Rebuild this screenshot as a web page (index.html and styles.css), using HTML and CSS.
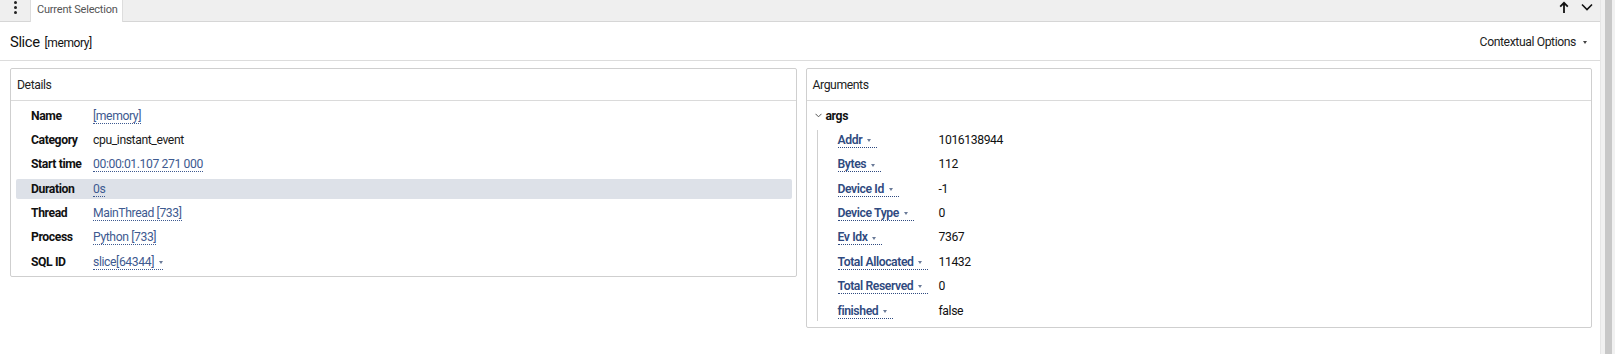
FILE: index.html
```html
<!DOCTYPE html>
<html>
<head>
<meta charset="utf-8">
<link rel="stylesheet" href="styles.css">
</head>
<body>
<div class="app">
  <div class="main">
    <div class="tabbar">
      <div class="kebab"><span></span><span></span><span></span></div>
      <div class="tab">Current Selection</div>
      <div class="spacer"></div>
      <div class="bar-icons">
        <svg class="ico-up" width="10" height="13" viewBox="0 0 10 13"><path d="M5 12V2M1.2 5.6L5 1.8l3.8 3.8" fill="none" stroke="#111" stroke-width="1.8"/></svg>
        <svg class="ico-down" width="12" height="8" viewBox="0 0 12 8"><path d="M1 1.5l5 5 5-5" fill="none" stroke="#111" stroke-width="1.6"/></svg>
      </div>
    </div>
    <div class="titlebar">
      <div class="title"><span class="title-main">Slice</span><span class="title-sub">[memory]</span></div>
      <div class="ctx">Contextual Options <i class="caret dark"></i></div>
    </div>
    <div class="content">
      <section class="panel details">
        <div class="panel-head">Details</div>
        <div class="panel-body">
          <div class="row"><span class="lbl">Name</span><span class="val"><span class="link">[memory]</span></span></div>
          <div class="row"><span class="lbl">Category</span><span class="val">cpu_instant_event</span></div>
          <div class="row"><span class="lbl">Start time</span><span class="val"><span class="link">00:00:01.107 271 000</span></span></div>
          <div class="row hl"><span class="lbl">Duration</span><span class="val"><span class="link">0s</span></span></div>
          <div class="row"><span class="lbl">Thread</span><span class="val"><span class="link">MainThread [733]</span></span></div>
          <div class="row"><span class="lbl">Process</span><span class="val"><span class="link">Python [733]</span></span></div>
          <div class="row"><span class="lbl">SQL ID</span><span class="val"><span class="link">slice[64344] <i class="caret"></i></span></span></div>
        </div>
      </section>
      <section class="panel arguments">
        <div class="panel-head">Arguments</div>
        <div class="panel-body">
          <div class="tree-head">
            <svg class="chev" width="7" height="5" viewBox="0 0 7 5"><path d="M0.5 0.8l3 3 3-3" fill="none" stroke="#555" stroke-width="1"/></svg>
            <span class="tree-name">args</span>
          </div>
          <div class="tree-children">
            <div class="arow"><span class="key"><span class="klink">Addr <i class="caret"></i></span></span><span class="aval">1016138944</span></div>
            <div class="arow"><span class="key"><span class="klink">Bytes <i class="caret"></i></span></span><span class="aval">112</span></div>
            <div class="arow"><span class="key"><span class="klink">Device Id <i class="caret"></i></span></span><span class="aval">-1</span></div>
            <div class="arow"><span class="key"><span class="klink">Device Type <i class="caret"></i></span></span><span class="aval">0</span></div>
            <div class="arow"><span class="key"><span class="klink">Ev Idx <i class="caret"></i></span></span><span class="aval">7367</span></div>
            <div class="arow"><span class="key"><span class="klink">Total Allocated <i class="caret"></i></span></span><span class="aval">11432</span></div>
            <div class="arow"><span class="key"><span class="klink">Total Reserved <i class="caret"></i></span></span><span class="aval">0</span></div>
            <div class="arow"><span class="key"><span class="klink">finished <i class="caret"></i></span></span><span class="aval">false</span></div>
          </div>
        </div>
      </section>
    </div>
  </div>
  <div class="scrollbar"><div class="thumb"></div></div>
</div>
</body>
</html>
```

FILE: styles.css
```css
* { box-sizing: border-box; }
html, body { margin: 0; padding: 0; background: #fff; }
body {
  font-family: Roboto, "Noto Sans", sans-serif;
  font-size: 12.2px;
  letter-spacing: -0.4px;
  color: #1a1a1a;
  width: 1615px;
  height: 354px;
  overflow: hidden;
}
.app { display: flex; height: 354px; }
.main { flex: 1; display: flex; flex-direction: column; min-width: 0; }

.tabbar {
  height: 22px;
  background: #efefef;
  border-bottom: 1px solid #d6d6d6;
  display: flex;
  align-items: stretch;
}
.kebab {
  width: 30px;
  display: flex;
  flex-direction: column;
  align-items: center;
  padding-top: 1px;
  gap: 2px;
}
.kebab span { width: 3px; height: 3px; border-radius: 50%; background: #222; }
.tab {
  width: 93px;
  background: #fff;
  border-left: 1px solid #ddd;
  border-right: 1px solid #ddd;
  margin-bottom: -1px;
  font-size: 11px;
  letter-spacing: -0.2px;
  color: #555;
  padding: 3px 0 0 6px;
}
.spacer { flex: 1; }
.bar-icons { display: flex; align-items: flex-start; gap: 12px; padding: 1px 7px 0 0; }
.ico-down { margin-top: 2px; }

.titlebar {
  height: 39px;
  border-bottom: 1px solid #dcdcdc;
  display: flex;
  align-items: center;
  justify-content: space-between;
  padding: 2px 13px 0 10px;
}
.title-main { font-size: 14.8px; color: #111; }
.title-sub { font-size: 12px; margin-left: 5px; color: #111; }
.ctx { font-size: 12.2px; color: #222; display: flex; align-items: center; gap: 5px; }

.caret {
  display: inline-block;
  width: 0; height: 0;
  border-left: 2.5px solid transparent;
  border-right: 2.5px solid transparent;
  border-top: 3px solid #6a7a98;
  vertical-align: middle;
  margin-left: 2px;
}
.caret.dark { border-top-color: #444; }

.content {
  display: flex;
  align-items: flex-start;
  gap: 9px;
  padding: 7px 8px 0 10px;
}
.panel {
  flex: 1;
  border: 1px solid #cfcfcf;
  border-radius: 2px;
}
.panel-head {
  height: 32px;
  border-bottom: 1px solid #dadada;
  padding: 0 6px;
  display: flex;
  align-items: center;
  color: #222;
}
.details .panel-body { padding: 4.7px 4px 4.3px 5px; display: flex; flex-direction: column; gap: 4.37px; }
.row {
  height: 20px;
  display: grid;
  grid-template-columns: 62px 1fr;
  align-items: center;
  padding-left: 15px;
  border-radius: 2px;
}
.row.hl { background: #dde1e8; }
.lbl { font-weight: 700; color: #111; }
.link {
  color: #3e5a90;
  border-bottom: 1px dotted #3e5a90;
  padding-bottom: 0;
}

.arguments .panel-body { padding: 4.7px 4px 6px 8px; display: flex; flex-direction: column; gap: 4.37px; }
.tree-head { height: 20px; display: flex; align-items: center; }
.chev { margin-right: 4px; }
.tree-name { font-weight: 700; color: #111; }
.tree-children {
  margin-left: 2px;
  border-left: 1px solid #cfcfcf;
  display: flex;
  flex-direction: column;
  gap: 4.37px;
}
.arow {
  height: 20px;
  display: grid;
  grid-template-columns: 101px 1fr;
  align-items: center;
  padding-left: 20px;
}
.klink {
  color: #2f4a80;
  font-weight: 600;
  border-bottom: 1px dotted #2f4a80;
  padding-right: 6px;
}
.klink .caret { margin-left: 2px; }
.aval { color: #111; }

.scrollbar {
  width: 15px;
  background: #f1f1f1;
  padding: 0 3px 0 4px;
  border-left: 1px solid #e6e6e6;
}
.thumb { background: #c8c8c8; height: 100%; }
```
